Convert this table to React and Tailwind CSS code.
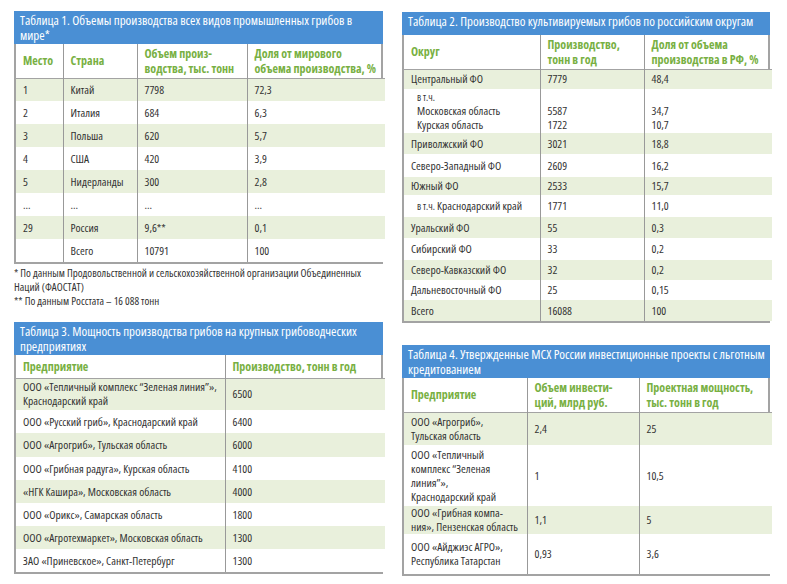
import React from 'react';

const t1 = {
    title: <>Таблица 1. Объемы производства всех видов промышленных грибов в<br />мире*</>,
    titleH: 'h-[33px]',
    cols: ['w-[47px]', 'w-[74px]', 'w-[110px]', 'w-[138px]'],
    head: ['Место', 'Страна', <>Объем произ-<br />водства, тыс. тонн</>, <>Доля от мирового<br />объема производства, %</>],
    headH: 'h-[34px]',
    rows: [
        ['1', 'Китай', '7798', '72,3'],
        ['2', 'Италия', '684', '6,3'],
        ['3', 'Польша', '620', '5,7'],
        ['4', 'США', '420', '3,9'],
        ['5', 'Нидерланды', '300', '2,8'],
        ['...', '...', '...', '...'],
        ['29', 'Россия', '9,6**', '0,1'],
        ['', 'Всего', '10791', '100'],
    ],
    rowH: Array(8).fill('h-[23px]'),
};

const t2 = {
    title: 'Таблица 2. Производство культивируемых грибов по российским округам',
    titleH: 'h-[23px]',
    cols: ['w-[136px]', 'w-[104px]', 'w-[128px]'],
    head: ['Округ', <>Производство,<br />тонн в год</>, <>Доля от объема<br />производства в РФ, %</>],
    headH: 'h-[34px]',
    rows: [
        ['Центральный ФО', '7779', '48,4'],
        [
            <div className="pl-[6px] leading-[13.5px]"><div className="text-[10px]">в т.ч.</div>Московская область<br />Курская область</div>,
            <div className="leading-[13.5px] pt-[13.5px]">5587<br />1722</div>,
            <div className="leading-[13.5px] pt-[13.5px]">34,7<br />10,7</div>,
        ],
        ['Приволжский ФО', '3021', '18,8'],
        ['Северо-Западный ФО', '2609', '16,2'],
        ['Южный ФО', '2533', '15,7'],
        [<span className="pl-[6px]"><span className="text-[10px]">в т.ч.</span> Краснодарский край</span>, '1771', '11,0'],
        ['Уральский ФО', '55', '0,3'],
        ['Сибирский ФО', '33', '0,2'],
        ['Северо-Кавказский ФО', '32', '0,2'],
        ['Дальневосточный ФО', '25', '0,15'],
        ['Всего', '16088', '100'],
    ],
    rowH: ['h-[20px]', 'h-[44px]', 'h-[21px]', 'h-[23px]', 'h-[18px]', 'h-[22px]', 'h-[21px]', 'h-[22px]', 'h-[20px]', 'h-[20px]', 'h-[21px]'],
};

const t3 = {
    title: <>Таблица 3. Мощность производства грибов на крупных грибоводческих<br />предприятиях</>,
    titleH: 'h-[33px]',
    cols: ['w-[209px]', 'w-[160px]'],
    head: ['Предприятие', 'Производство, тонн в год'],
    headH: 'h-[23px]',
    rows: [
        [<>ООО «Тепличный комплекс “Зеленая линия”»,<br />Краснодарский край</>, '6500'],
        ['ООО «Русский гриб», Краснодарский край', '6400'],
        ['ООО «Агрогриб», Тульская область', '6000'],
        ['ООО «Грибная радуга», Курская область', '4100'],
        ['«НГК Кашира», Московская область', '4000'],
        ['ООО «Орикс», Самарская область', '1800'],
        ['ООО «Агротехмаркет», Московская область', '1300'],
        ['ЗАО «Приневское», Санкт-Петербург', '1300'],
    ],
    rowH: ['h-[32px]', 'h-[23px]', 'h-[24px]', 'h-[23px]', 'h-[23px]', 'h-[23px]', 'h-[23px]', 'h-[23px]'],
};

const t4 = {
    title: <>Таблица 4. Утвержденные МСХ России инвестиционные проекты с льготным<br />кредитованием</>,
    titleH: 'h-[33px]',
    cols: ['w-[123px]', 'w-[112px]', 'w-[133px]'],
    head: ['Предприятие', <>Объем инвести-<br />ций, млрд руб.</>, <>Проектная мощность,<br />тыс. тонн в год</>],
    headH: 'h-[34px]',
    rows: [
        [<>ООО «Агрогриб»,<br />Тульская область</>, '2,4', '25'],
        [<>ООО «Тепличный<br />комплекс “Зеленая<br />линия”»,<br />Краснодарский край</>, '1', '10,5'],
        [<>ООО «Грибная компа-<br />ния», Пензенская область</>, '1,1', '5'],
        [<>ООО «Айджиэс АГРО»,<br />Республика Татарстан</>, '0,93', '3,6'],
    ],
    rowH: ['h-[33px]', 'h-[61px]', 'h-[28px]', 'h-[40px]'],
};

const DataTable = ({ t }) => (
    <div className="border-2 border-[#a3a3a3] border-t-0">
        <div className={`${t.titleH} bg-[#4a8fd4] text-white text-[13px] leading-[15px] pl-[6px] pt-[2px] -mx-[2px] whitespace-nowrap overflow-hidden`}>
            {t.title}
        </div>
        <table className="border-collapse table-fixed w-full">
            <colgroup>
                {t.cols.map((c, i) => <col key={i} className={c} />)}
            </colgroup>
            <thead>
                <tr className={`${t.headH} border-b border-[#a3a3a3]`}>
                    {t.head.map((h, i) => (
                        <th key={i} className="text-left align-middle font-bold text-[#78b043] text-[12px] leading-[15px] px-[7px] whitespace-nowrap border-l border-[#999] first:border-l-0">
                            {h}
                        </th>
                    ))}
                </tr>
            </thead>
            <tbody>
                {t.rows.map((r, i) => (
                    <tr key={i} className={`${t.rowH[i]} ${i % 2 === 0 ? 'bg-[#e9f0dc]' : 'bg-white'}`}>
                        {r.map((c, j) => (
                            <td key={j} className="align-middle text-[11.5px] leading-[14px] text-[#333] px-[7px] whitespace-nowrap border-l border-[#999] first:border-l-0">
                                {c}
                            </td>
                        ))}
                    </tr>
                ))}
            </tbody>
        </table>
    </div>
);

export default function App() {
    return (
        <div className="w-[787px] h-[584px] bg-white overflow-hidden flex gap-[19px] pl-[14px] font-['Open_Sans'] font-stretch-[75%]">
            <div className="w-[369px] pt-[11px]">
                <DataTable t={t1} />
                <div className="text-[11px] leading-[14px] text-[#333] pt-[2px]">
                    <p>* По данным Продовольственной и сельскохозяйственной организации Объединенных<br />Наций (ФАОСТАТ)</p>
                    <p>** По данным Росстата – 16 088 тонн</p>
                </div>
                <div className="pt-[14px]">
                    <DataTable t={t3} />
                </div>
            </div>
            <div className="w-[368px] pt-[12px]">
                <DataTable t={t2} />
                <div className="pt-[22px]">
                    <DataTable t={t4} />
                </div>
            </div>
        </div>
    );
}
